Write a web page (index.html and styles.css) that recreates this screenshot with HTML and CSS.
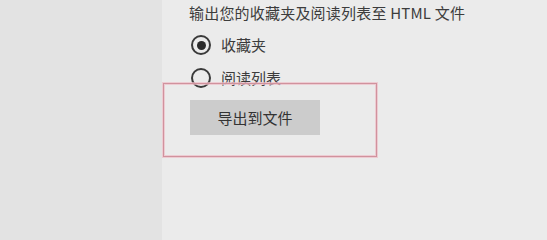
FILE: index.html
```html
<!DOCTYPE html>
<html lang="zh-CN">
<head>
<meta charset="utf-8">
<link rel="stylesheet" href="styles.css">
</head>
<body>
<div class="page">
  <aside class="sidebar"></aside>
  <main class="main">
    <p class="title">输出您的收藏夹及阅读列表至 HTML 文件</p>
    <label class="radio-row"><span class="radio checked"></span><span class="radio-label">收藏夹</span></label>
    <label class="radio-row second"><span class="radio"></span><span class="radio-label">阅读列表</span></label>
    <button class="export-btn">导出到文件</button>
    <div class="highlight"></div>
  </main>
</div>
</body>
</html>
```
FILE: styles.css
```css
html, body {
  margin: 0;
  padding: 0;
  overflow: hidden;
  background: #ebebeb;
  font-family: "Noto Sans CJK SC", "Noto Sans", sans-serif;
  color: #3c3c3c;
}
.page {
  display: flex;
  min-height: 100vh;
}
.sidebar {
  width: 162px;
  background: #e3e3e3;
  flex: none;
}
.main {
  position: relative;
  flex: 1;
  background: #ebebeb;
  padding: 3px 0 0 27px;
  box-sizing: border-box;
  display: flex;
  flex-direction: column;
  align-items: flex-start;
}
.title {
  margin: 0;
  font-size: 15px;
  line-height: 20px;
  letter-spacing: 0.2px;
  color: #3c3c3c;
}
.radio-row {
  display: flex;
  align-items: center;
  height: 20px;
  margin-top: 12px;
  margin-left: 2px;
  gap: 10px;
}
.radio-row.second {
  margin-top: 13px;
}
.radio {
  width: 20px;
  height: 20px;
  box-sizing: border-box;
  border: 2px solid #3a3a3a;
  border-radius: 50%;
  display: flex;
  align-items: center;
  justify-content: center;
}
.radio.checked::after {
  content: "";
  width: 9px;
  height: 9px;
  border-radius: 50%;
  background: #2a2a2a;
}
.radio-label {
  font-size: 15px;
  line-height: 20px;
  color: #3c3c3c;
}
.export-btn {
  margin-top: 12px;
  margin-left: 1px;
  width: 130px;
  height: 35px;
  border: none;
  background: #cccccc;
  font-family: inherit;
  font-size: 15px;
  color: #333;
  padding: 0;
}
.highlight {
  position: absolute;
  left: 1px;
  top: 83px;
  width: 214px;
  height: 74px;
  box-sizing: border-box;
  border: 1px solid #d0929d;
  box-shadow: 0 0 0 1px rgba(238, 190, 200, 0.7), inset 0 0 0 1px rgba(238, 190, 200, 0.7);
  pointer-events: none;
}
```
